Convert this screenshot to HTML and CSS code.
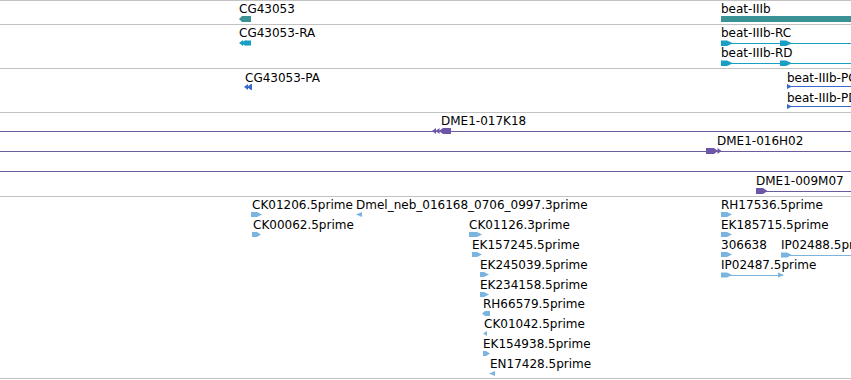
FILE: index.html
```html
<!DOCTYPE html>
<html>
<head>
<meta charset="utf-8">
<link rel="stylesheet" href="styles.css">
</head>
<body>
<div class="tracks">

  <div class="track">
    <div class="row">
      <span class="label" style="left:239px">CG43053</span>
      <svg class="glyph gene" style="left:239px" width="12" height="6"><path d="M0 3 L3 0 H12 V6 H3 Z"/></svg>
      <span class="label" style="left:721px">beat-IIIb</span>
      <svg class="glyph gene" style="left:721px" width="130" height="6"><rect x="0" y="0" width="130" height="6"/></svg>
    </div>
  </div>

  <div class="track">
    <div class="row">
      <span class="label" style="left:239px">CG43053-RA</span>
      <svg class="glyph mrna" style="left:239px" width="13" height="6"><path d="M0 3 L4 0 V1.5 L7 0 V6 L4 4.5 V6 Z"/><rect x="7" y="0.5" width="5" height="5"/></svg>
      <span class="label" style="left:721px">beat-IIIb-RC</span>
      <svg class="glyph mrna" style="left:721px" width="130" height="6"><rect x="0" y="3" width="130" height="1"/><path d="M0 0.5 H6 L12 3.2 L6 6 H0 Z"/><path d="M59 0.5 H65 L71 3.2 L65 6 H59 Z"/></svg>
    </div>
    <div class="row">
      <span class="label" style="left:721px">beat-IIIb-RD</span>
      <svg class="glyph mrna" style="left:721px" width="130" height="6"><rect x="0" y="3" width="130" height="1"/><path d="M0 0.5 H6 L12 3.2 L6 6 H0 Z"/><path d="M59 0.5 H65 L71 3.2 L65 6 H59 Z"/></svg>
    </div>
  </div>

  <div class="track">
    <div class="row shift">
      <span class="label" style="left:245px">CG43053-PA</span>
      <svg class="glyph prot" style="left:244px" width="8" height="6"><path d="M0 3 L4 0 V6 Z M3 3 L7 0 H8 V6 H7 Z"/></svg>
      <span class="label" style="left:787px">beat-IIIb-PC</span>
      <svg class="glyph prot" style="left:787px" width="64" height="6"><rect x="0" y="2" width="64" height="1"/><path d="M0 0 L5 2.5 L0 5 Z"/></svg>
    </div>
    <div class="row shift">
      <span class="label" style="left:787px">beat-IIIb-PD</span>
      <svg class="glyph prot" style="left:787px" width="64" height="6"><rect x="0" y="2" width="64" height="1"/><path d="M0 0 L5 2.5 L0 5 Z"/></svg>
    </div>
  </div>

  <div class="track">
    <div class="row">
      <div class="span-line" style="left:0"></div>
      <span class="label" style="left:441px">DME1-017K18</span>
      <svg class="glyph bac" style="left:432px" width="20" height="6"><path d="M0 3 L4 0 V6 Z M3.5 3 L7.5 0 V6 Z M7 3 L11 0 V6 Z"/><rect x="11" y="0" width="8" height="6"/></svg>
    </div>
    <div class="row">
      <div class="span-line" style="left:0"></div>
      <span class="label" style="left:717px">DME1-016H02</span>
      <svg class="glyph bac" style="left:706px" width="16" height="6"><rect x="0" y="0" width="8" height="6"/><path d="M8 0 L12 3 L8 6 Z M11.5 0 L15.5 3 L11.5 6 Z"/></svg>
    </div>
    <div class="row">
      <div class="span-line" style="left:0"></div>
    </div>
    <div class="row">
      <div class="span-line" style="left:756px"></div>
      <span class="label" style="left:756px">DME1-009M07</span>
      <svg class="glyph bac" style="left:756px" width="12" height="6"><rect x="0" y="0" width="7" height="6"/><path d="M7 0 L11.5 3 L7 6 Z"/></svg>
    </div>
  </div>

  <div class="track last">
    <div class="row">
      <span class="label" style="left:252px">CK01206.5prime</span>
      <svg class="glyph est" style="left:251px" width="12" height="6"><path d="M0 0 H6 L11 2.5 L6 5 H0 Z"/></svg>
      <span class="label" style="left:356px">Dmel_neb_016168_0706_0997.3prime</span>
      <svg class="glyph est" style="left:356px" width="7" height="6"><path d="M0 2.5 L6 0 V5 Z"/></svg>
      <span class="label" style="left:721px">RH17536.5prime</span>
      <svg class="glyph est" style="left:721px" width="12" height="6"><path d="M0 0 H6 L11 2.5 L6 5 H0 Z"/></svg>
    </div>
    <div class="row">
      <span class="label" style="left:253px">CK00062.5prime</span>
      <svg class="glyph est" style="left:252px" width="10" height="6"><path d="M0 0 H5 L9 2.5 L5 5 H0 Z"/></svg>
      <span class="label" style="left:469px">CK01126.3prime</span>
      <svg class="glyph est" style="left:469px" width="14" height="6"><path d="M0 0 H8 L13 2.5 L8 5 H0 Z"/></svg>
      <span class="label" style="left:721px">EK185715.5prime</span>
      <svg class="glyph est" style="left:721px" width="12" height="6"><path d="M0 0 H6 L11 2.5 L6 5 H0 Z"/></svg>
    </div>
    <div class="row">
      <span class="label" style="left:472px">EK157245.5prime</span>
      <svg class="glyph est" style="left:472px" width="11" height="6"><path d="M0 0 H5 L10 2.5 L5 5 H0 Z"/></svg>
      <span class="label" style="left:721px">306638</span>
      <svg class="glyph est" style="left:721px" width="12" height="6"><path d="M0 0 H6 L11 2.5 L6 5 H0 Z"/></svg>
      <span class="label" style="left:781px">IP02488.5prime</span>
      <svg class="glyph est" style="left:781px" width="70" height="6"><rect x="0" y="3" width="70" height="1"/><path d="M0 0.5 H6 L11 3 L6 5.5 H0 Z"/></svg>
    </div>
    <div class="row">
      <span class="label" style="left:480px">EK245039.5prime</span>
      <svg class="glyph est" style="left:480px" width="10" height="6"><path d="M0 0 H4 L9 2.5 L4 5 H0 Z"/></svg>
      <span class="label" style="left:721px">IP02487.5prime</span>
      <svg class="glyph est" style="left:721px" width="64" height="6"><rect x="0" y="3" width="62" height="1"/><path d="M0 0.5 H6 L11 3 L6 5.5 H0 Z"/><path d="M57 0.5 L63 3 L57 5.5 Z"/></svg>
    </div>
    <div class="row">
      <span class="label" style="left:480px">EK234158.5prime</span>
      <svg class="glyph est" style="left:480px" width="10" height="6"><path d="M0 0 H4 L9 2.5 L4 5 H0 Z"/></svg>
    </div>
    <div class="row">
      <span class="label" style="left:483px">RH66579.5prime</span>
      <svg class="glyph est" style="left:482px" width="8" height="6"><path d="M0 2.5 L3 0 H8 V5 H3 Z"/></svg>
    </div>
    <div class="row">
      <span class="label" style="left:484px">CK01042.5prime</span>
      <svg class="glyph est" style="left:483px" width="5" height="6"><path d="M0 2.5 L4 0 V5 Z"/></svg>
    </div>
    <div class="row">
      <span class="label" style="left:483px">EK154938.5prime</span>
      <svg class="glyph est" style="left:483px" width="8" height="6"><path d="M0 0 H3 L7 2.5 L3 5 H0 Z"/></svg>
    </div>
    <div class="row">
      <span class="label" style="left:490px">EN17428.5prime</span>
      <svg class="glyph est" style="left:489px" width="7" height="6"><path d="M0 2.5 L6 0 V5 Z"/></svg>
    </div>
  </div>

</div>
</body>
</html>
```

FILE: styles.css
```css
html, body {
  margin: 0;
  padding: 0;
  background: #ffffff;
  overflow: hidden;
}

body {
  width: 851px;
  height: 380px;
  font-family: "DejaVu Sans", sans-serif;
  font-size: 12px;
  line-height: 16px;
  color: #000000;
}

.tracks {
  display: flex;
  flex-direction: column;
  width: 851px;
  overflow: hidden;
}

.track {
  display: flex;
  flex-direction: column;
  padding-bottom: 4px;
  box-shadow: inset 0 1px 0 #c2c2c2;
}

.track.last {
  height: 183px;
  box-sizing: border-box;
  box-shadow: inset 0 1px 0 #c2c2c2, inset 0 -1px 0 #c2c2c2;
}

.row {
  position: relative;
  height: 20px;
}

.label {
  position: absolute;
  top: 1px;
  white-space: nowrap;
}

.row.shift .label {
  top: 2px;
}

.glyph {
  position: absolute;
  top: 16px;
  display: block;
  overflow: visible;
}

.span-line {
  position: absolute;
  top: 19px;
  right: 0;
  height: 1px;
  background: #6b5c9e;
}

.gene { fill: #3a9294; }
.mrna { fill: #17a0c4; }
.prot { fill: #3a69cc; }
.bac  { fill: #6c56a8; }
.est  { fill: #7bb5df; }
```
